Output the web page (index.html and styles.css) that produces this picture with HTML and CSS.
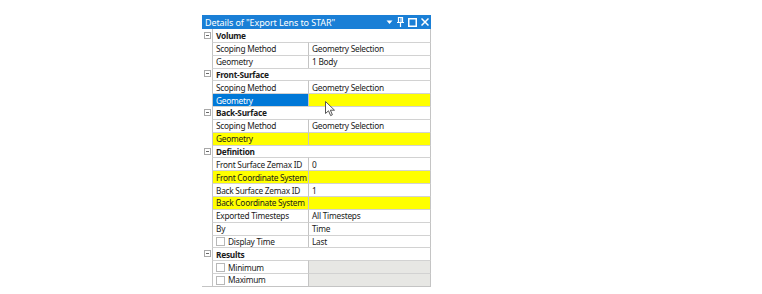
FILE: index.html
```html
<!DOCTYPE html>
<html lang="en">
<head>
    <meta charset="UTF-8">
    <title>Details of "Export Lens to STAR"</title>
    <link rel="stylesheet" href="styles.css">
</head>
<body>
    <div class="details">
        <div class="titlebar">
            <span class="title">Details of "Export Lens to STAR"</span>
            <span class="grip"></span>
            <span class="tb-icons">
                <svg width="7" height="6" viewBox="0 0 7 6"><path d="M0.5 1.5 L6.5 1.5 L3.5 5 Z" fill="#fff"/></svg>
                <svg width="7" height="10" viewBox="0 0 7 10"><path d="M1.5 0.5 H5.5 V5.5 H1.5 Z M0 5.5 H7 M3.5 5.5 V10" stroke="#fff" stroke-width="1.2" fill="none"/><path d="M4 1 V5" stroke="#fff" stroke-width="1"/></svg>
                <svg width="9" height="9" viewBox="0 0 9 9"><rect x="0.75" y="0.75" width="7.5" height="7.5" stroke="#fff" stroke-width="1.5" fill="none"/></svg>
                <svg width="8" height="8" viewBox="0 0 8 8"><path d="M0.5 0.5 L7.5 7.5 M7.5 0.5 L0.5 7.5" stroke="#fff" stroke-width="1.5"/></svg>
            </span>
        </div>

        <div class="props">
            <div class="row group"><span class="gutter"><i class="minus"></i></span><span class="cell head">Volume</span></div>
            <div class="row"><span class="gutter"></span><span class="cell name">Scoping Method</span><span class="cell value">Geometry Selection</span></div>
            <div class="row"><span class="gutter"></span><span class="cell name">Geometry</span><span class="cell value">1 Body</span></div>

            <div class="row group"><span class="gutter"><i class="minus"></i></span><span class="cell head">Front-Surface</span></div>
            <div class="row"><span class="gutter"></span><span class="cell name">Scoping Method</span><span class="cell value">Geometry Selection</span></div>
            <div class="row selected"><span class="gutter"></span><span class="cell name">Geometry</span><span class="cell value"></span></div>

            <div class="row group"><span class="gutter"><i class="minus"></i></span><span class="cell head">Back-Surface</span></div>
            <div class="row"><span class="gutter"></span><span class="cell name">Scoping Method</span><span class="cell value">Geometry Selection</span></div>
            <div class="row missing"><span class="gutter"></span><span class="cell name">Geometry</span><span class="cell value"></span></div>

            <div class="row group"><span class="gutter"><i class="minus"></i></span><span class="cell head">Definition</span></div>
            <div class="row"><span class="gutter"></span><span class="cell name">Front Surface Zemax ID</span><span class="cell value">0</span></div>
            <div class="row missing"><span class="gutter"></span><span class="cell name">Front Coordinate System</span><span class="cell value"></span></div>
            <div class="row"><span class="gutter"></span><span class="cell name">Back Surface Zemax ID</span><span class="cell value">1</span></div>
            <div class="row missing"><span class="gutter"></span><span class="cell name">Back Coordinate System</span><span class="cell value"></span></div>
            <div class="row"><span class="gutter"></span><span class="cell name">Exported Timesteps</span><span class="cell value">All Timesteps</span></div>
            <div class="row"><span class="gutter"></span><span class="cell name">By</span><span class="cell value">Time</span></div>
            <div class="row"><span class="gutter"></span><span class="cell name"><i class="check"></i>Display Time</span><span class="cell value">Last</span></div>

            <div class="row group"><span class="gutter"><i class="minus"></i></span><span class="cell head">Results</span></div>
            <div class="row"><span class="gutter"></span><span class="cell name"><i class="check"></i>Minimum</span><span class="cell value readonly"></span></div>
            <div class="row"><span class="gutter"></span><span class="cell name"><i class="check"></i>Maximum</span><span class="cell value readonly"></span></div>
        </div>

        <svg class="cursor" width="11" height="16" viewBox="0 0 11 16"><path d="M0.5 0.5 V12.5 L3.5 9.8 L5.6 14.6 L7.4 13.8 L5.4 9.2 L9.5 9.2 Z" fill="#fff" stroke="#555" stroke-width="1"/></svg>
    </div>
</body>
</html>
```

FILE: styles.css
```css
/* Base styles */
body {
    margin: 0;
    padding: 15px 0 0 202px;
    background-color: #fff;
    font-family: "Noto Sans", "Open Sans", sans-serif;
    font-size: 8.3px;
    letter-spacing: -0.25px;
    color: #1a1a1a;
}

.details {
    position: relative;
    width: 229px;
}

/* Title bar */
.titlebar {
    display: flex;
    align-items: center;
    height: 14px;
    padding: 0 2px 0 3px;
    background-color: #1a7fd6;
    color: #fff;
    font-size: 9px;
    letter-spacing: -0.1px;
}

.title {
    white-space: nowrap;
}

.grip {
    flex: 1;
    height: 4px;
    margin: 0 5px 0 5px;
    background-image: radial-gradient(circle, rgba(255,255,255,0.3) 0.5px, transparent 0.7px);
    background-size: 2px 2px;
}

.tb-icons {
    display: flex;
    align-items: center;
    gap: 4px;
}

.tb-icons svg {
    display: block;
}

/* Property grid */
.props {
    border-bottom: 1px solid #c4c4c4;
}

.row {
    display: grid;
    grid-template-columns: 10px 97px 1fr;
    height: 12.85px;
    line-height: 12px;
}

.gutter {
    display: flex;
    align-items: center;
    justify-content: center;
    background: #fff;
}

.cell {
    border-top: 1px solid #d2d2d2;
    border-right: 1px solid #c4c4c4;
    padding: 1px 0 0 3px;
    white-space: nowrap;
    overflow: hidden;
    display: flex;
    align-items: center;
}

.row .name {
    border-left: 1px solid #c4c4c4;
}

.row:first-child .cell {
    border-top: none;
}

.head {
    grid-column: 2 / 4;
    font-weight: bold;
    border-left: 1px solid #c4c4c4;
}

.minus {
    display: block;
    width: 7px;
    height: 7px;
    box-sizing: border-box;
    border: 1px solid #a8a8a8;
    background: linear-gradient(#6a6a6a, #6a6a6a) center / 3px 1px no-repeat;
}

.selected .name {
    background-color: #0078d7;
    color: #fff;
}

.selected .value,
.missing .cell {
    background-color: #ffff00;
}

.readonly {
    background-color: #e7e7e4;
}

.check {
    display: inline-block;
    width: 9px;
    height: 9px;
    box-sizing: border-box;
    border: 1px solid #b8b8b8;
    background: #fff;
    margin-right: 3px;
}

.cursor {
    position: absolute;
    left: 123px;
    top: 86px;
}
```
